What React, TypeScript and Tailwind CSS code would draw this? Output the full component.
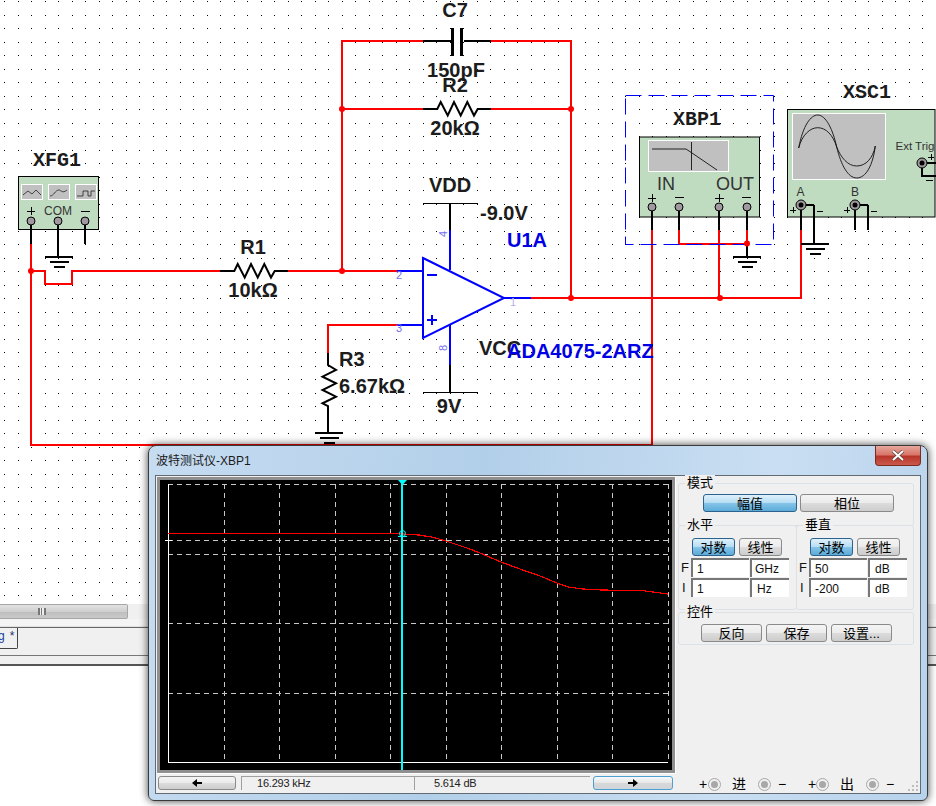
const RED = '#ff0000'
const BLUE = '#0000ff'

// grid of canvas dots
const dots: { x: number; y: number }[] = []
for (let i = 0; i < 70; i++) {
  for (let j = 0; j < 45; j++) {
    dots.push({ x: Math.round(4 + 13.5 * i), y: Math.round(1 + 13.5 * j) })
  }
}

function Label({ x, y, size = 20, fill = '#1c1c1c', anchor = 'middle', bold = true, mono = false, children }: {
  x: number
  y: number
  size?: number
  fill?: string
  anchor?: 'start' | 'middle' | 'end'
  bold?: boolean
  mono?: boolean
  children: React.ReactNode
}) {
  return (
    <text
      x={x}
      y={y}
      fontSize={size}
      fill={fill}
      textAnchor={anchor}
      fontWeight={bold ? 700 : 400}
      fontFamily={mono ? '"Liberation Mono", monospace' : '"Liberation Sans", sans-serif'}
    >
      {children}
    </text>
  )
}

function Ground({ x, y }: { x: number; y: number }) {
  return (
    <g stroke="#000" strokeWidth={2} shapeRendering="crispEdges">
      <path d={`M${x - 14} ${y}H${x + 14}`} />
      <path d={`M${x - 9} ${y + 5}H${x + 10}`} />
      <path d={`M${x - 5} ${y + 10}H${x + 6}`} />
    </g>
  )
}

function Pin({ x, y }: { x: number; y: number }) {
  return <circle cx={x} cy={y} r={4} fill="#a09aa0" stroke="#000" strokeWidth={1} />
}

function ScopePin({ x, y }: { x: number; y: number }) {
  return (
    <g>
      <circle cx={x} cy={y} r={5} fill="#a09aa0" stroke="#000" strokeWidth={1} />
      <circle cx={x} cy={y} r={2.5} fill="#000" />
    </g>
  )
}

function Junction({ x, y }: { x: number; y: number }) {
  return <circle cx={x} cy={y} r={3} fill={RED} />
}

function Resistor({ dx, dy }: { dx: number; dy: number }) {
  return (
    <path
      transform={`translate(${dx} ${dy})`}
      d="M423 109H437.3L440.7 102L447.7 115.5L454 102L460.7 115.5L467.3 102L474 115.5L477.7 109H491"
      fill="none"
      stroke="#000"
      strokeWidth={2}
    />
  )
}

function Schematic() {
  return (
    <svg width={936} height={604} viewBox="0 0 936 604" className="block">
      <g fill="#000" shapeRendering="crispEdges">
        {dots.map((d, i) => (
          <rect key={i} x={d.x} y={d.y} width={1} height={1} />
        ))}
      </g>

      {/* red wires */}
      <g fill="none" stroke={RED} strokeWidth={2} shapeRendering="crispEdges">
        <path d="M423 41H342V271M491 41H571V298M342 109H423M491 109H571" />
        <path d="M220 271H72V284H45V271H31V445H652V230" />
        <path d="M288 271H397M531 298H801V230" />
        <path d="M397 325H328V353" />
        <path d="M31 244V271M719 230V298M679 230V243.5H747V230" />
      </g>

      {/* feedback parts */}
      <path d="M423 41H451M464 41H491" stroke="#000" strokeWidth={2} shapeRendering="crispEdges" />
      <path d="M452 28V56M461 28V56" stroke="#000" strokeWidth={3} shapeRendering="crispEdges" />
      <Resistor dx={0} dy={0} />
      <Resistor dx={-203} dy={162} />
      <path
        d="M328 353V365L336 370L322.5 376.7L336 383.3L322.5 390L336 396.7L322.5 403.3L328 406V432"
        fill="none"
        stroke="#000"
        strokeWidth={2}
      />
      <Ground x={329} y={433} />
      <Junction x={342} y={109} />
      <Junction x={571} y={109} />
      <Junction x={342} y={271} />
      <Junction x={571} y={298} />
      <Junction x={720} y={298} />
      <Junction x={31} y={271} />

      {/* op amp */}
      <path d="M423 258L504 298L423 338Z" fill="#fff" stroke={BLUE} strokeWidth={2} />
      <g stroke={BLUE} strokeWidth={2} shapeRendering="crispEdges">
        <path d="M397 271H423M397 325H423M504 298H531M450 230V270M450 326V365" />
        <path d="M427 275H437M427 320H437M432 315V325" strokeWidth={2} />
      </g>
      <g stroke="#000" shapeRendering="crispEdges" strokeWidth={2}>
        <path d="M450 203V230M450 365V392" />
        <path d="M423 203H478M423 392H478" strokeWidth={1} />
      </g>
      <Label x={399} y={279} size={11} bold={false} fill="#6f6ff0">2</Label>
      <Label x={399} y={332} size={11} bold={false} fill="#6f6ff0">3</Label>
      <Label x={513} y={306} size={11} bold={false} fill="#b0b0f0">1</Label>
      <g transform="rotate(-90 443 234)"><Label x={443} y={238} size={11} bold={false} fill="#6f6ff0">4</Label></g>
      <g transform="rotate(-90 443 348)"><Label x={443} y={352} size={11} bold={false} fill="#6f6ff0">8</Label></g>

      {/* function generator */}
      <rect x={18.5} y={176.5} width={80} height={53} fill="#c0dcc0" stroke="#000" />
      <g fill="#c0c0c0" stroke="#fff">
        <rect x={21.5} y={184.5} width={21} height={15} />
        <rect x={48.5} y={184.5} width={21} height={15} />
        <rect x={75.5} y={184.5} width={21} height={15} />
      </g>
      <g fill="none" stroke="#222" strokeWidth={0.8}>
        <path d="M23 195L28 191L32 194L36 190L41 195" />
        <path d="M50 196C54 196 55 190 59 190C61 190 62 194 67 190" />
        <path d="M77 196H83V191H88V196H91V191H95" />
      </g>
      <Label x={58} y={215} size={12} bold={false} fill="#333">COM</Label>
      <path d="M27 211H35M31 207V215M81 211H90" stroke="#000" shapeRendering="crispEdges" />
      <path d="M31 221V244M58 221V257M85 221V244" stroke="#000" strokeWidth={2} shapeRendering="crispEdges" />
      <Pin x={31} y={221} />
      <Pin x={58} y={221} />
      <Pin x={85} y={221} />
      <Ground x={59} y={257} />

      {/* bode plotter */}
      <rect x={625.5} y={95.5} width={148} height={149} fill="none" stroke={BLUE} strokeDasharray="16 7" />
      <rect x={639.5} y={137} width={120} height={80} fill="#c0dcc0" stroke="#000" />
      <rect x={648.5} y={140.5} width={80} height={31} fill="#c0c0c0" stroke="#fff" />
      <path d="M652 149H686L692 153L717 170M691.5 142V170" fill="none" stroke="#111" strokeWidth={0.9} />
      <Label x={666} y={190} size={18} bold={false} fill="#333">IN</Label>
      <Label x={735} y={190} size={18} bold={false} fill="#333">OUT</Label>
      <path d="M648 198H656M652 194V202M675 197H684M715 198H724M719 194V202M742 197H751" stroke="#000" shapeRendering="crispEdges" />
      <path d="M652 207V230M679 207V230M719 207V230M747 207V230" stroke="#000" strokeWidth={2} shapeRendering="crispEdges" />
      <path d="M747 244V257" stroke="#000" strokeWidth={2} shapeRendering="crispEdges" />
      <Pin x={652} y={207} />
      <Pin x={679} y={207} />
      <Pin x={719} y={207} />
      <Pin x={747} y={207} />
      <Junction x={747} y={243.5} />
      <Ground x={747} y={257} />

      {/* oscilloscope */}
      <rect x={787.5} y={109.5} width={147.5} height={107.5} fill="#c0dcc0" stroke="#000" />
      <rect x={792.5} y={113.5} width={93} height={66} fill="#c0c0c0" stroke="#fff" />
      <g fill="none" stroke="#111" strokeWidth={0.9}>
        <path d="M798.7 148C803 125 811 115 817.7 115C826 115 833 130 836.7 147C841 165 848 178 856.7 178C866 178 873 165 875.3 146" />
        <path d="M798.7 148C802 135 810 127.7 817.7 127.7C826 127.7 833 135 836.7 147C841 158 848 166 856.7 166C866 166 873 158 875.3 146" />
      </g>
      <Label x={915} y={150} size={11.5} bold={false} fill="#333">Ext Trig</Label>
      <Label x={800.5} y={196} size={12} bold={false} fill="#333">A</Label>
      <Label x={855} y={196} size={12} bold={false} fill="#333">B</Label>
      <path d="M922 163V176H936M922 163H936" fill="none" stroke="#000" strokeWidth={2} shapeRendering="crispEdges" />
      <path d="M928 157H934M931 154V160M926 180H933M790 210H796M793 207V213M817 211H823M844 210H850M847 207V213M871 211H877" stroke="#000" shapeRendering="crispEdges" />
      <path d="M801 205V230M814 205V244M801 205H814M855 205V230M868 205V230M855 205H868" fill="none" stroke="#000" strokeWidth={2} shapeRendering="crispEdges" />
      <ScopePin x={801} y={205} />
      <ScopePin x={855} y={205} />
      <ScopePin x={922} y={163} />
      <Ground x={815} y={244} />

      {/* labels */}
      <Label x={57} y={166} mono>XFG1</Label>
      <Label x={697} y={125} mono>XBP1</Label>
      <Label x={867} y={98} mono>XSC1</Label>
      <Label x={455} y={17}>C7</Label>
      <Label x={456} y={77}>150pF</Label>
      <Label x={455} y={92}>R2</Label>
      <Label x={455} y={135}>20kΩ</Label>
      <Label x={450} y={192}>VDD</Label>
      <Label x={480} y={220} anchor="start">-9.0V</Label>
      <Label x={527} y={247} fill="#0000e6">U1A</Label>
      <Label x={253} y={254}>R1</Label>
      <Label x={253} y={297}>10kΩ</Label>
      <Label x={339} y={366} anchor="start">R3</Label>
      <Label x={339} y={393} anchor="start">6.67kΩ</Label>
      <Label x={479} y={355} anchor="start">VCC</Label>
      <Label x={507} y={358} anchor="start" fill="#0000e6">ADA4075-2ARZ</Label>
      <Label x={449} y={413}>9V</Label>
    </svg>
  )
}

function Plot() {
  const columns = [224, 279, 335, 390, 446, 501, 557, 612, 668]
  const rows = [484, 540, 554, 623, 693]
  return (
    <svg width={512} height={290} viewBox="160 480 512 290" className="block">
      <g stroke="#c8c8c8" strokeDasharray="5 4" shapeRendering="crispEdges">
        {columns.map((x) => (
          <path key={x} d={`M${x + 0.5} 484V762`} />
        ))}
        {rows.map((y) => (
          <path key={y} d={`M168 ${y + 0.5}H668`} />
        ))}
      </g>
      <path d="M168.5 484V762.5H668M165 540.5H172" fill="none" stroke="#fff" shapeRendering="crispEdges" />
      <path d="M168 533.5H403" stroke={RED} shapeRendering="crispEdges" />
      <path
        d="M403 534L419 535L433 537.3L446 541L467 548L480 553L501 562L520 569L540 576L557 583L568 587L583 589L602 590L643 590.7L668 594"
        fill="none"
        stroke={RED}
        strokeWidth={1.2}
        shapeRendering="crispEdges"
      />
      <path d="M402 480V770" stroke="#00ffff" strokeWidth={2} shapeRendering="crispEdges" />
      <path d="M398 480H407L402.5 485Z" fill="#00ffff" />
      <circle cx={402.5} cy={533.5} r={3} fill="none" stroke="#00ffff" />
      <path d="M398 536.5H407" stroke="#00ffff" shapeRendering="crispEdges" />
    </svg>
  )
}

function WinButton({ label, active, className }: { label: React.ReactNode; active?: boolean; className: string }) {
  return (
    <div
      className={`flex items-center justify-center rounded-[3px] border text-[13px] leading-none text-black ${
        active
          ? 'border-[#2c628b] bg-[linear-gradient(#dff1fb,#b5dcf3_50%,#86c5ea_50%,#5cabd9)]'
          : 'border-[#8a8a8a] bg-[linear-gradient(#f4f4f4,#ebebeb_50%,#dcdcdc_50%,#cdcdcd)]'
      } ${className}`}
    >
      {label}
    </div>
  )
}

function Field({ value, className }: { value: string; className: string }) {
  return (
    <div className={`flex h-[19px] items-center border-t-2 border-l-2 border-[#777] border-r-white border-b-white bg-white text-[12px] text-[#111] ${className}`}>
      {value}
    </div>
  )
}

function Group({ title, className, children }: { title: string; className: string; children: React.ReactNode }) {
  return (
    <div className={`relative rounded-[3px] border border-[#dce1e6] ${className}`}>
      <span className="absolute top-[-9px] left-[6px] bg-[#f0f0f0] px-[2px] text-[13px] leading-[16px] text-black">{title}</span>
      {children}
    </div>
  )
}

function Scale({ first, second, rowOne, rowTwo, unitPad }: {
  first: string
  second: string
  rowOne: [string, string]
  rowTwo: [string, string]
  unitPad: [string, string]
}) {
  return (
    <div className="flex flex-col pt-[12px]">
      <div className="flex gap-[4px] pl-[13px]">
        <WinButton label={first} active className="h-[18px] w-[43px]" />
        <WinButton label={second} className="h-[18px] w-[43px]" />
      </div>
      <div className="mt-[2px] flex items-center">
        <span className="w-[12px] pl-[2px] text-[13px] leading-none text-[#111]">F</span>
        <Field value={rowOne[0]} className="w-[58px] pl-[4px]" />
        <Field value={rowOne[1]} className={`ml-[1px] w-[39px] ${unitPad[0]}`} />
      </div>
      <div className="mt-px flex items-center">
        <span className="w-[12px] pl-[3px] text-[13px] leading-none text-[#111]">I</span>
        <Field value={rowTwo[0]} className="w-[58px] pl-[4px]" />
        <Field value={rowTwo[1]} className={`ml-[1px] w-[39px] ${unitPad[1]}`} />
      </div>
    </div>
  )
}

function Terminal() {
  return (
    <span className="flex h-[13px] w-[13px] items-center justify-center rounded-full border border-[#a8a8a8] bg-[#f0f0f0]">
      <span className="h-[7px] w-[7px] rounded-full bg-[#a8a8a8]" />
    </span>
  )
}

function Arrow({ right }: { right?: boolean }) {
  return (
    <svg width={10} height={8} viewBox="0 0 10 8">
      <path d={right ? 'M0 3H5V0L10 4L5 8V5H0Z' : 'M10 3H5V0L0 4L5 8V5H10Z'} fill="#000" />
    </svg>
  )
}

function BodeWindow() {
  return (
    <div className="absolute top-[445px] left-[148px] flex h-[356px] w-[780px] flex-col rounded-t-[8px] rounded-b-[6px] border border-[#3a3a3a] bg-[linear-gradient(100deg,#c6dcf1,#b2cfe9_40%,#c9def2_75%,#b7d2ec)] px-[6px] pb-[6px] shadow-[0_0_9px_rgba(0,0,0,0.75)]">
      <div className="flex h-[29px] shrink-0 items-center pl-[1px] text-[12px] text-[#1a1a1a]">波特测试仪-XBP1</div>

      {/* close button */}
      <div className="absolute top-0 right-[6px] flex h-[20px] w-[46px] items-center justify-center rounded-b-[4px] border border-t-0 border-[#7d2a22] bg-[linear-gradient(#e7a79d,#d8776a_45%,#b9352a_55%,#c95a4c)]">
        <svg width={14} height={11} viewBox="0 0 14 11">
          <path d="M2 1L12 10M12 1L2 10" stroke="#59403c" strokeWidth={3.4} />
          <path d="M2 1L12 10M12 1L2 10" stroke="#fff" strokeWidth={2} />
        </svg>
      </div>

      <div className="relative flex min-h-0 flex-1 border border-[#626b74] bg-[#f0f0f0]">
        {/* screen and cursor readout */}
        <div className="flex w-[522px] shrink-0 flex-col pt-px pl-px">
          <div className="h-[297px] w-[519px] border-r border-b border-white">
            <div className="w-[518px] border-[3px] border-[#8f8f8f] bg-black">
              <Plot />
            </div>
          </div>
          <div className="mt-[2px] flex h-[14px] items-stretch pl-px text-[11px] leading-none text-[#222]">
            <WinButton label={<Arrow />} className="w-[78px]" />
            <div className="ml-[5px] flex w-[173px] items-center border-t border-l border-[#a0a0a0] border-b-white pl-[15px] tracking-[-0.2px]">16.293 kHz</div>
            <div className="flex w-[176px] items-center border-t border-l border-[#a0a0a0] border-b-white pl-[19px] tracking-[-0.2px]">5.614 dB</div>
            <WinButton label={<Arrow right />} active className="ml-[3px] w-[80px] !border-[#4d9fd1] !bg-[linear-gradient(#f6f9fb,#e6e6e6_50%,#d8d8d8_50%,#cfd6da)]" />
          </div>
        </div>

        {/* settings */}
        <div className="flex w-[236px] flex-col pt-[7px]">
          <Group title="模式" className="h-[43px]">
            <div className="flex gap-[3px] pt-[10px] pl-[24px]">
              <WinButton label="幅值" active className="h-[18px] w-[94px]" />
              <WinButton label="相位" className="h-[18px] w-[94px]" />
            </div>
          </Group>
          <div className="-mt-px flex">
            <Group title="水平" className="h-[85px] w-[119px]">
              <Scale first="对数" second="线性" rowOne={['1', 'GHz']} rowTwo={['1', 'Hz']} unitPad={['pl-[3px]', 'pl-[5px]']} />
            </Group>
            <Group title="垂直" className="-ml-px h-[85px] w-[118px]">
              <Scale first="对数" second="线性" rowOne={['50', 'dB']} rowTwo={['-200', 'dB']} unitPad={['pl-[5px]', 'pl-[5px]']} />
            </Group>
          </div>
          <Group title="控件" className="mt-[2px] h-[33px]">
            <div className="flex gap-[4px] pt-[11px] pl-[22px]">
              <WinButton label="反向" className="h-[18px] w-[61px]" />
              <WinButton label="保存" className="h-[18px] w-[61px]" />
              <WinButton label="设置..." className="h-[18px] w-[61px]" />
            </div>
          </Group>
          <div className="mt-[132px] flex items-center pl-[21px] text-[14px] leading-none text-black">
            <span className="w-[9px]">+</span>
            <Terminal />
            <span className="ml-[11px] w-[17px]">进</span>
            <span className="ml-[9px]"><Terminal /></span>
            <span className="ml-[7px] w-[30px]">−</span>
            <span className="w-[8px]">+</span>
            <Terminal />
            <span className="ml-[11px] w-[17px]">出</span>
            <span className="ml-[9px]"><Terminal /></span>
            <span className="ml-[7px]">−</span>
          </div>
        </div>

        {/* size grip */}
        <svg width={11} height={11} viewBox="0 0 11 11" className="absolute right-px bottom-px">
          <path d="M8 0h2v2H8zM4 4h2v2H4zM8 4h2v2H8zM0 8h2v2H0zM4 8h2v2H4zM8 8h2v2H8z" fill="#bdbdbd" />
        </svg>
      </div>
    </div>
  )
}

export default function App() {
  return (
    <div className="relative h-[806px] w-[936px] overflow-hidden bg-white font-['Liberation_Sans','Noto_Sans_CJK_SC',sans-serif]">
      <Schematic />

      {/* horizontal scroll bar */}
      <div className="flex h-[15px] items-stretch bg-[#f0f0f0]">
        <div className="flex w-[128px] items-center rounded-r-[2px] border border-l-0 border-[#a6a6a6] bg-[linear-gradient(#e2e2e2,#cfcfcf_50%,#bdbdbd_50%,#c9c9c9)] pl-[38px]">
          <span className="h-[7px] w-[8px] border-x-2 border-[#777] bg-[linear-gradient(90deg,#eee_0%,#eee_30%,#777_30%,#777_60%,#eee_60%)]" />
        </div>
      </div>

      <div className="h-[8px] border-b border-[#e0e0e0] bg-[#f4f4f4]" />

      {/* design tab strip */}
      <div className="h-[28px] border-t border-[#666] bg-[#f0f0f0]">
        <div className="flex h-[21px] w-[18px] items-start overflow-hidden rounded-br-[2px] border-r border-b border-[#444] bg-[#f0f0f0] text-[12px] leading-[16px]">
          <span className="ml-[-2px] text-[#1a3fa0]">g</span>
          <span className="ml-[5px] text-[#1c2f70]">*</span>
        </div>
      </div>

      <div className="h-[9px] border-t border-[#777] bg-[#f0f0f0]" />
      <div className="h-[2px] bg-[#555]" />

      <BodeWindow />
    </div>
  )
}
